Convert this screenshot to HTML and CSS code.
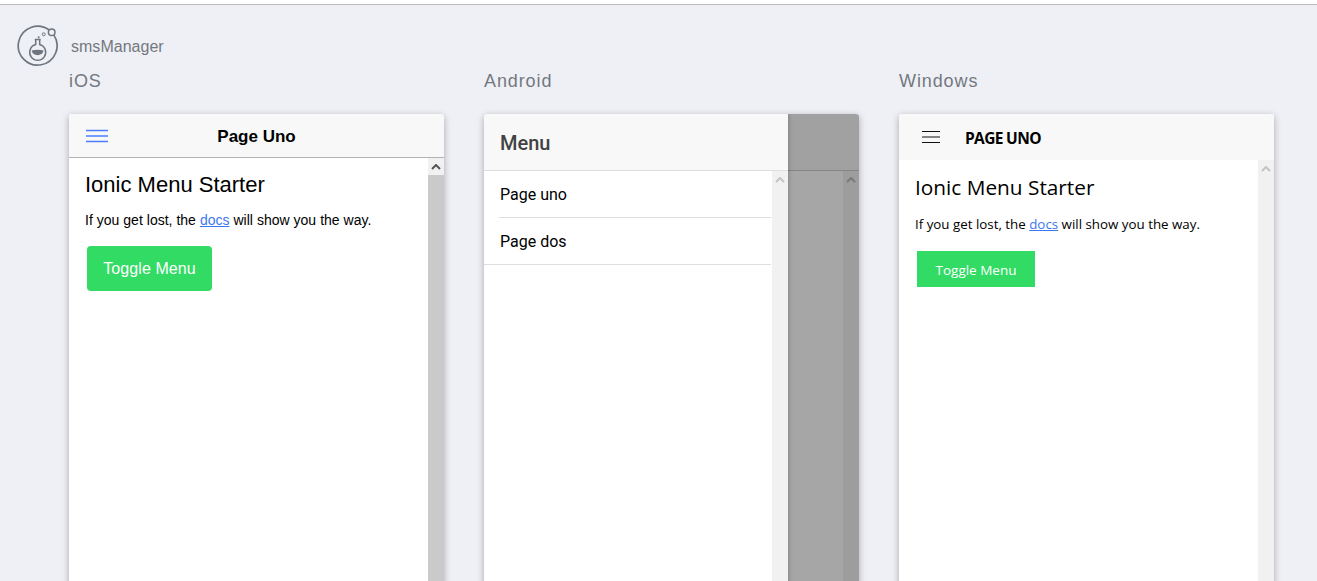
FILE: index.html
```html
<!DOCTYPE html>
<html lang="en">
<head>
<meta charset="utf-8">
<title>smsManager</title>
<link rel="stylesheet" href="styles.css">
</head>
<body>
<div class="topstrip"></div>
<header class="brand">
  <svg class="logo" width="42" height="42" viewBox="0 0 42 42" fill="none" stroke="#6f7580">
    <path d="M32.1 5A19.4 19.4 0 1 0 36.8 9.9" stroke-width="1.7"/>
    <circle cx="34.7" cy="7.3" r="3.3" stroke-width="1.5"/>
    <circle cx="26.7" cy="9.3" r="1.5" stroke-width="1"/>
    <circle cx="21.7" cy="12.3" r="1" fill="#6f7580" stroke="none"/>
    <path d="M17.7 14.5h6M18.7 14.5v5a8 8 0 1 0 4 0v-5" stroke-width="1.5"/>
    <path d="M14.6 25.5q6-1.6 12 0a6.2 6.2 0 0 1-12 0z" fill="#6f7580" stroke="none"/>
  </svg>
  <span class="brand-name">smsManager</span>
</header>
<main class="platforms">
  <section class="platform">
    <h2 class="platform-name">iOS</h2>
    <div class="device ios">
      <div class="bar">
        <svg class="burger" width="22" height="14" viewBox="0 0 22 14"><path d="M0 1.5h22M0 7h22M0 12.5h22" stroke="#4a7dff" stroke-width="1.5"/></svg>
        <h3 class="bar-title">Page Uno</h3>
      </div>
      <div class="body">
        <div class="content">
          <h1>Ionic Menu Starter</h1>
          <p>If you get lost, the <a href="#">docs</a> will show you the way.</p>
          <button>Toggle Menu</button>
        </div>
        <div class="scroll">
          <div class="arrow"><svg width="10" height="6" viewBox="0 0 10 6"><path d="M1 5l4-4 4 4" fill="none" stroke="#555" stroke-width="2"/></svg></div>
          <div class="thumb"></div>
        </div>
      </div>
    </div>
  </section>

  <section class="platform">
    <h2 class="platform-name">Android</h2>
    <div class="device android">
      <div class="bar"></div>
      <div class="body">
        <div class="content"></div>
        <div class="scroll">
          <div class="arrow"><svg width="10" height="6" viewBox="0 0 10 6"><path d="M1 5l4-4 4 4" fill="none" stroke="#bbb" stroke-width="2"/></svg></div>
        </div>
      </div>
      <div class="scrim"></div>
      <aside class="menu">
        <div class="menu-head"><h3>Menu</h3></div>
        <div class="menu-body">
          <ul class="menu-list">
            <li>Page uno</li>
            <li>Page dos</li>
          </ul>
          <div class="scroll">
            <div class="arrow"><svg width="10" height="6" viewBox="0 0 10 6"><path d="M1 5l4-4 4 4" fill="none" stroke="#c4c4c4" stroke-width="2"/></svg></div>
          </div>
        </div>
      </aside>
    </div>
  </section>

  <section class="platform">
    <h2 class="platform-name">Windows</h2>
    <div class="device windows">
      <div class="bar">
        <svg class="burger" width="18" height="12" viewBox="0 0 18 12"><path d="M0 .5h18M0 6h18M0 11.5h18" stroke="#111" stroke-width="1"/></svg>
        <h3 class="bar-title">PAGE UNO</h3>
      </div>
      <div class="body">
        <div class="content">
          <h1>Ionic Menu Starter</h1>
          <p>If you get lost, the <a href="#">docs</a> will show you the way.</p>
          <button>Toggle Menu</button>
        </div>
        <div class="scroll">
          <div class="arrow"><svg width="10" height="6" viewBox="0 0 10 6"><path d="M1 5l4-4 4 4" fill="none" stroke="#c4c4c4" stroke-width="2"/></svg></div>
        </div>
      </div>
    </div>
  </section>
</main>
</body>
</html>
```

FILE: styles.css
```css
* { box-sizing: border-box; }
html, body { height: 100%; }
body {
  margin: 0;
  height: 581px;
  overflow: hidden;
  background: #eff0f5;
  font-family: "Liberation Sans", Arial, sans-serif;
}
.topstrip {
  height: 5px;
  background: #fff;
  border-bottom: 1px solid #bdbdbd;
}
.brand {
  display: flex;
  align-items: center;
  height: 42px;
  margin-top: 20px;
  padding-left: 16px;
}
.logo { margin-left: 1px; }
.brand-name {
  margin-left: 12px;
  padding-top: 2px;
  font-size: 16px;
  letter-spacing: .02px;
  color: #737880;
}
.platforms {
  display: flex;
  gap: 40px;
  padding-left: 69px;
}
.platform { width: 375px; flex: none; }
.platform-name {
  margin: 4px 0 23px;
  height: 20px;
  font-size: 18px;
  line-height: 20px;
  font-weight: 400;
  letter-spacing: .9px;
  color: #737880;
}
.device {
  position: relative;
  width: 375px;
  height: 667px;
  display: flex;
  flex-direction: column;
  background: #fff;
  border-radius: 3px;
  overflow: hidden;
  box-shadow: 0 2px 7px rgba(0,0,0,.3);
}
.bar { flex: none; display: flex; align-items: center; background: #f8f8f8; }
.body { flex: 1; display: flex; min-height: 0; }
.content { flex: 1; min-width: 0; }
.scroll { flex: none; width: 16px; background: #f1f1f1; display: flex; flex-direction: column; }
.arrow { height: 17px; display: flex; justify-content: center; align-items: center; }
.thumb { flex: 1; background: #cacaca; }
h1, h3, p { margin: 0; }
a { color: #3b78f0; }
button { border: 0; color: #fff; background: #32db64; display: block; padding: 0; }

/* iOS */
.ios .bar { height: 44px; border-bottom: 1px solid #b2b2b2; }
.ios .burger { margin-left: 17px; }
.ios .bar-title { flex: 1; padding: 2px 39px 0 0; text-align: center; font-size: 17px; font-weight: 700; color: #000; }
.ios .content { padding: 14px 16px 16px; }
.ios h1 { font-size: 22px; line-height: 26px; font-weight: 400; color: #000; }
.ios p { margin-top: 12px; font-size: 14px; line-height: 20px; word-spacing: .1px; color: #000; }
.ios button { margin: 16px 2px 0; width: 125px; height: 45px; border-radius: 4px; font: 16px "Liberation Sans", Arial, sans-serif; letter-spacing: .1px; }

/* Android */
.android .bar { height: 57px; border-bottom: 1px solid #ccc; }
.scrim { position: absolute; inset: 0; background: rgba(0,0,0,.35); }
.menu {
  position: absolute;
  left: 0; top: 0; bottom: 0;
  width: 304px;
  display: flex;
  flex-direction: column;
  background: #fff;
  font-family: Roboto, sans-serif;
  box-shadow: 1px 0 4px rgba(0,0,0,.2);
}
.menu-head {
  flex: none;
  height: 57px;
  padding: 2px 0 0 16px;
  display: flex;
  align-items: center;
  background: #f8f8f8;
  border-bottom: 1px solid #dedede;
}
.menu-head h3 { font-size: 20px; font-weight: 500; color: #424242; }
.menu-body { flex: 1; display: flex; min-height: 0; }
.menu-list { flex: 1; list-style: none; margin: 0; padding: 0 1px 0 0; }
.menu-list li {
  height: 47px;
  padding: 1px 0 0 16px;
  font-size: 16px;
  line-height: 46px;
  color: #000;
  border-bottom: 1px solid #dedede;
}
.menu-list li:first-child { border-image: linear-gradient(to right, transparent 16px, #dedede 16px) 1; }

/* Windows */
.windows { font-family: "Open Sans", sans-serif; }
.windows .bar { height: 46px; }
.windows .burger { margin-left: 23px; }
.windows .bar-title { margin-left: 25px; padding-top: 2px; font-size: 15.5px; letter-spacing: -.65px; font-weight: 700; color: #000; }
.windows .content { padding: 15px 16px 16px; }
.windows h1 { font-size: 20.8px; line-height: 24px; font-weight: 400; color: #000; }
.windows p { margin-top: 15px; font-size: 13.33px; line-height: 20px; color: #000; }
.windows button { margin: 17px 2px 0; width: 118px; height: 36px; padding-top: 2px; font: 13.5px "Open Sans", sans-serif; }
```
